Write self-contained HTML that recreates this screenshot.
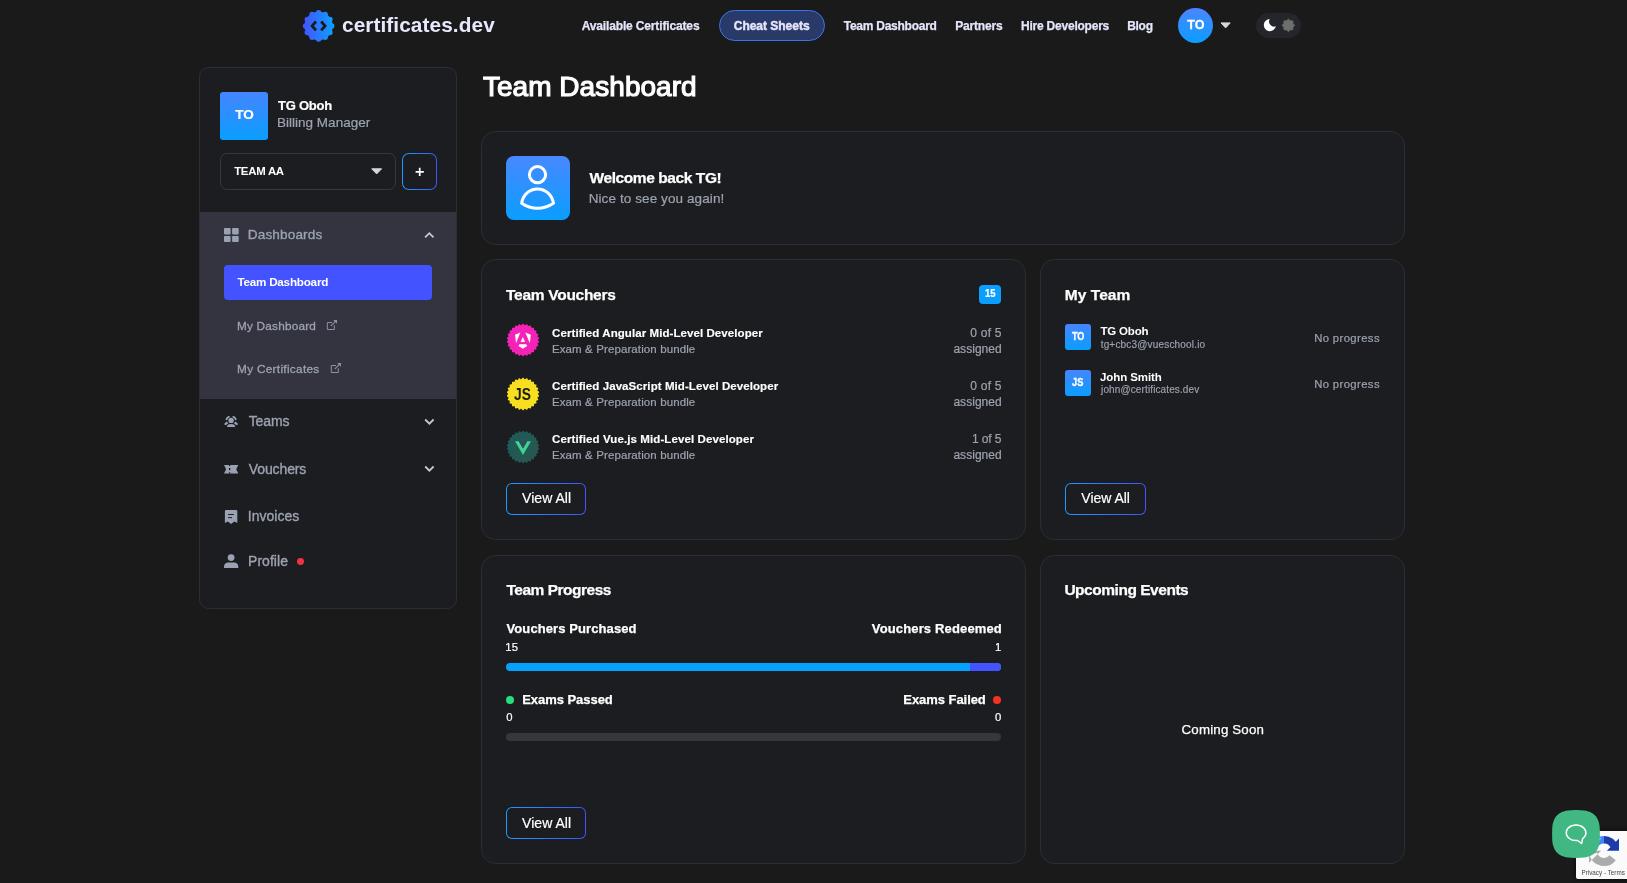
<!DOCTYPE html>
<html lang="en">
<head>
<meta charset="utf-8">
<title>Team Dashboard - certificates.dev</title>
<style>
*{box-sizing:border-box;margin:0;padding:0}
html,body{width:1627px;height:883px;overflow:hidden}
body{background:#1a1a1a;font-family:"Liberation Sans",sans-serif;position:relative;color:#fff}
.t{position:absolute;white-space:nowrap;display:block}
.abs{position:absolute}
.card{position:absolute;background:#1c1d21;border:1px solid #2c2d36;border-radius:14.5px}
.btn{position:absolute;width:80px;height:32px;border-radius:6px;background:linear-gradient(90deg,#1a9cff,#4353ff)}
.btn i{position:absolute;left:1.2px;top:1.2px;right:1.2px;bottom:1.2px;border-radius:4.8px;background:#1c1d21}
svg{position:absolute;display:block;overflow:visible}
#app{position:absolute;left:0;top:0;width:1627px;height:883px;overflow:hidden;will-change:transform}

</style>
</head>
<body>
<div id="app">
<!-- ================= HEADER ================= -->
<svg class="abs" style="left:303px;top:10px" width="31" height="31" viewBox="0 0 31 31">
  <defs><linearGradient id="lg" gradientUnits="userSpaceOnUse" x1="0" y1="0" x2="31" y2="0"><stop offset="0" stop-color="#4353ff"/><stop offset="1" stop-color="#0f9fff"/></linearGradient></defs>
  <g fill="url(#lg)"><circle cx="15.60" cy="15.90" r="14.15"/><circle cx="15.60" cy="2.80" r="2.70"/><circle cx="22.15" cy="4.56" r="2.70"/><circle cx="26.94" cy="9.35" r="2.70"/><circle cx="28.70" cy="15.90" r="2.70"/><circle cx="26.94" cy="22.45" r="2.70"/><circle cx="22.15" cy="27.24" r="2.70"/><circle cx="15.60" cy="29.00" r="2.70"/><circle cx="9.05" cy="27.24" r="2.70"/><circle cx="4.26" cy="22.45" r="2.70"/><circle cx="2.50" cy="15.90" r="2.70"/><circle cx="4.26" cy="9.35" r="2.70"/><circle cx="9.05" cy="4.56" r="2.70"/></g>
  <path d="M13.0 11.5 L9.1 15.9 L13.0 20.3 M18.2 11.5 L22.1 15.9 L18.2 20.3" fill="none" stroke="#1a1a1a" stroke-width="2.7" stroke-linejoin="miter"/>
</svg>
<div class="abs" style="left:719px;top:10px;width:106px;height:31px;border-radius:16px;background:#2a3a68;border:1.5px solid #3a74ea"></div>
<div class="abs" style="left:1178px;top:8px;width:35px;height:35px;border-radius:50%;background:linear-gradient(180deg,#4b85ff,#0a9eff)"></div>
<svg class="abs" style="left:1219px;top:21px" width="14" height="9" viewBox="0 0 14 9"><path d="M2 1.9 H11.2 L6.6 6.9 Z" fill="#d6d6d6" stroke="#d6d6d6" stroke-width="1" stroke-linejoin="round"/></svg>
<div class="abs" style="left:1256px;top:13px;width:45px;height:25px;border-radius:12.5px;background:#25262b"></div>
<svg class="abs" style="left:1262px;top:18px" width="16" height="15" viewBox="0 0 16 15"><path d="M7.75 1.00 A6.1 6.1 0 1 0 13.88 8.32 A5.1 5.1 0 0 1 7.75 1.00 Z" fill="#fff"/></svg>
<svg class="abs" style="left:1281px;top:18px" width="15" height="15" viewBox="0 0 15 15"><path d="M7.4 0.9 L9.3 2.7 L11.9 2.8 L12 5.4 L13.8 7.3 L12 9.2 L11.9 11.8 L9.3 11.9 L7.4 13.7 L5.5 11.9 L2.9 11.8 L2.8 9.2 L1 7.3 L2.8 5.4 L2.9 2.8 L5.5 2.7 Z" fill="#6e6e6e" stroke="#6e6e6e" stroke-width="0.6" stroke-linejoin="round"/></svg>

<!-- ================= SIDEBAR ================= -->
<div class="abs" style="left:199px;top:67px;width:258px;height:542px;border-radius:9.5px;background:#1c1d21;border:1px solid #2c2d36;overflow:hidden">
  <div class="abs" style="left:0;top:144px;width:256px;height:186.5px;background:#33343f"></div>
</div>
<div class="abs" style="left:220px;top:92px;width:48px;height:48px;border-radius:3px;background:linear-gradient(180deg,#4585ff,#0a9eff)"></div>
<div class="abs" style="left:220px;top:153px;width:176px;height:37px;border-radius:7px;border:1px solid #38393f"></div>
<svg class="abs" style="left:370px;top:167px" width="14" height="9" viewBox="0 0 14 9"><path d="M1.7 1.8 H11.6 L6.65 6.9 Z" fill="#d6d6d6" stroke="#d6d6d6" stroke-width="1" stroke-linejoin="round"/></svg>
<div class="abs" style="left:402px;top:153px;width:35px;height:37px;border-radius:7px;background:linear-gradient(90deg,#1a9cff,#4353ff)"><div class="abs" style="left:1.2px;top:1.2px;right:1.2px;bottom:1.2px;border-radius:5.8px;background:#1c1d21"></div></div>
<svg class="abs" style="left:414px;top:166px" width="12" height="12" viewBox="0 0 12 12"><path d="M1.6 5.9 H9.8 M5.7 1.8 V10" stroke="#fff" stroke-width="1.7" fill="none"/></svg>
<!-- dashboards icon -->
<svg class="abs" style="left:224px;top:228px" width="15" height="15" viewBox="0 0 15 15" fill="#9aa1b0"><rect x="0" y="0" width="6.6" height="6.4" rx="0.8"/><rect x="8.1" y="0" width="6.6" height="6.4" rx="0.8"/><rect x="0" y="8" width="6.6" height="6.1" rx="0.8"/><rect x="8.1" y="8" width="6.6" height="6.1" rx="0.8"/></svg>
<svg class="abs" style="left:423px;top:229px" width="13" height="12" viewBox="0 0 13 12"><path d="M2.1 8.4 L6.3 4.2 L10.5 8.4" fill="none" stroke="#c5c8d0" stroke-width="1.8"/></svg>
<div class="abs" style="left:224px;top:265px;width:208px;height:35px;border-radius:4px;background:#4353ff"></div>
<!-- external link icons -->
<svg class="abs" style="left:326px;top:319px" width="12" height="12" viewBox="0 0 12 12"><path d="M6 3.5 H1.3 V10.5 H8.3 V6.2" fill="none" stroke="#8c92a2" stroke-width="1"/><path d="M4.9 6.9 L10 1.8" stroke="#8c92a2" stroke-width="1.1" fill="none"/><path d="M7.2 1 H11 V4.8 Z" fill="#8c92a2"/></svg>
<svg class="abs" style="left:330.3px;top:362px" width="12" height="12" viewBox="0 0 12 12"><path d="M6 3.5 H1.3 V10.5 H8.3 V6.2" fill="none" stroke="#8c92a2" stroke-width="1"/><path d="M4.9 6.9 L10 1.8" stroke="#8c92a2" stroke-width="1.1" fill="none"/><path d="M7.2 1 H11 V4.8 Z" fill="#8c92a2"/></svg>
<!-- teams icon -->
<svg class="abs" style="left:223px;top:414px" width="17" height="15" viewBox="0 0 17 15" fill="#9aa1b0">
  <circle cx="8.1" cy="6.4" r="2.7"/>
  <path d="M4 12.9 C4 10.6 6 10 8.1 10 C10.2 10 12.2 10.6 12.2 12.9 Z"/>
  <path d="M3.5 5.3 A3.5 3.5 0 0 1 5.8 2.8" fill="none" stroke="#9aa1b0" stroke-width="1.9" stroke-linecap="round"/>
  <path d="M12.7 5.3 A3.5 3.5 0 0 0 10.4 2.8" fill="none" stroke="#9aa1b0" stroke-width="1.9" stroke-linecap="round"/>
  <path d="M1.2 10.4 C1.4 8.9 2.7 8 4.3 7.7 C4.6 8.6 5 9.2 5.5 9.6 C4.3 9.9 3.6 10.4 3.3 11.2 Z"/>
  <path d="M15 10.4 C14.8 8.9 13.5 8 11.9 7.7 C11.6 8.6 11.2 9.2 10.7 9.6 C11.9 9.9 12.6 10.4 12.9 11.2 Z"/>
</svg>
<svg class="abs" style="left:423px;top:416px" width="13" height="12" viewBox="0 0 13 12"><path d="M2.2 3.5 L6.4 7.7 L10.6 3.5" fill="none" stroke="#c5c8d0" stroke-width="1.8"/></svg>
<!-- vouchers icon -->
<svg class="abs" style="left:224px;top:465px" width="15" height="9" viewBox="0 0 15 9"><path d="M0 0 H14.3 L12.2 4.2 L14.3 8.4 H0 L2.1 4.2 Z" fill="#9aa1b0"/><path d="M5.6 0 V1.1 M5.6 3.1 V5.3 M5.6 7.3 V8.4" stroke="#1c1d21" stroke-width="1.3" fill="none"/></svg>
<svg class="abs" style="left:423px;top:463px" width="13" height="12" viewBox="0 0 13 12"><path d="M2.2 3.5 L6.4 7.7 L10.6 3.5" fill="none" stroke="#c5c8d0" stroke-width="1.8"/></svg>
<!-- invoices icon -->
<svg class="abs" style="left:224px;top:509px" width="15" height="16" viewBox="0 0 15 16"><path d="M2 1 H12.2 Q13.3 1 13.3 2.1 V13.9 L10.4 12.5 L7.1 15.0 L3.8 12.5 L0.9 13.9 V2.1 Q0.9 1 2 1 Z" fill="#9aa1b0"/><path d="M4.1 5.5 H9.8 M4.1 8.6 H8" stroke="#1c1d21" stroke-width="1" fill="none"/></svg>
<!-- profile icon -->
<svg class="abs" style="left:224px;top:553px" width="15" height="16" viewBox="0 0 15 16" fill="#9aa1b0"><circle cx="7.1" cy="4.6" r="3.4"/><path d="M0 15.1 V13.6 C0 11 2.2 9.6 4 9.6 H10.3 C12.1 9.6 14.3 11 14.3 13.6 V15.1 Z"/></svg>
<div class="abs" style="left:296.8px;top:558px;width:6.8px;height:6.8px;border-radius:50%;background:#ef3340"></div>

<!-- ================= MAIN ================= -->
<div class="card" style="left:481px;top:131px;width:924px;height:113.5px"></div>
<div class="abs" style="left:506px;top:156px;width:64px;height:64px;border-radius:8px;background:linear-gradient(180deg,#4888ff,#0a9eff)"></div>
<svg class="abs" style="left:506px;top:156px" width="64" height="64" viewBox="0 0 64 64" fill="none" stroke="#fff" stroke-width="3"><circle cx="31.5" cy="18.7" r="8.1"/><path d="M15.6 47.3 C17 38.5 23.5 32.9 31.5 32.9 C39.5 32.9 46 38.5 47.5 47.3 C42.5 50.6 37 52.3 31.5 52.3 C26 52.3 20.5 50.6 15.6 47.3 Z" stroke-linejoin="round"/></svg>

<!-- Team vouchers card -->
<div class="card" style="left:481px;top:259px;width:545px;height:280.5px"></div>
<div class="abs" style="left:979px;top:285px;width:22.2px;height:18.7px;border-radius:4px;background:#0a9eff"></div>
<!-- Angular badge -->
<svg class="abs" style="left:506.8px;top:324.3px" width="32" height="32" viewBox="0 0 32 32">
  <g fill="#f522b8"><path d="M30.90 16.00 L30.99 16.30 L31.24 16.61 L31.57 16.94 L31.90 17.28 L32.12 17.63 L32.18 17.96 L32.05 18.28 L31.74 18.56 L31.34 18.81 L30.94 19.05 L30.63 19.29 L30.47 19.57 L30.48 19.88 L30.65 20.24 L30.89 20.64 L31.13 21.05 L31.27 21.44 L31.24 21.78 L31.03 22.05 L30.67 22.25 L30.23 22.40 L29.78 22.54 L29.41 22.70 L29.19 22.92 L29.13 23.23 L29.21 23.62 L29.35 24.07 L29.48 24.52 L29.52 24.94 L29.41 25.26 L29.15 25.47 L28.75 25.58 L28.28 25.62 L27.81 25.64 L27.42 25.71 L27.15 25.88 L27.02 26.17 L27.00 26.56 L27.03 27.03 L27.05 27.50 L26.99 27.91 L26.81 28.20 L26.50 28.34 L26.09 28.35 L25.62 28.28 L25.16 28.19 L24.76 28.17 L24.46 28.26 L24.27 28.51 L24.15 28.89 L24.07 29.35 L23.97 29.81 L23.82 30.20 L23.57 30.43 L23.24 30.50 L22.84 30.41 L22.40 30.23 L21.98 30.03 L21.60 29.91 L21.28 29.93 L21.03 30.12 L20.83 30.47 L20.64 30.89 L20.44 31.32 L20.19 31.65 L19.90 31.83 L19.56 31.81 L19.19 31.63 L18.81 31.34 L18.45 31.05 L18.11 30.85 L17.80 30.79 L17.51 30.92 L17.23 31.20 L16.94 31.57 L16.64 31.94 L16.33 32.20 L16.00 32.30 L15.67 32.20 L15.36 31.94 L15.06 31.57 L14.77 31.20 L14.49 30.92 L14.20 30.79 L13.89 30.85 L13.55 31.05 L13.19 31.34 L12.81 31.63 L12.44 31.81 L12.10 31.83 L11.81 31.65 L11.56 31.32 L11.36 30.89 L11.17 30.47 L10.97 30.12 L10.72 29.93 L10.40 29.91 L10.02 30.03 L9.60 30.23 L9.16 30.41 L8.76 30.50 L8.43 30.43 L8.18 30.20 L8.02 29.81 L7.93 29.35 L7.85 28.89 L7.73 28.51 L7.54 28.26 L7.24 28.17 L6.84 28.19 L6.38 28.28 L5.91 28.35 L5.50 28.34 L5.19 28.20 L5.01 27.91 L4.95 27.50 L4.97 27.03 L5.00 26.56 L4.98 26.17 L4.85 25.88 L4.58 25.71 L4.19 25.64 L3.72 25.62 L3.25 25.58 L2.85 25.47 L2.59 25.26 L2.48 24.94 L2.52 24.52 L2.65 24.07 L2.79 23.63 L2.87 23.23 L2.81 22.92 L2.59 22.70 L2.22 22.54 L1.77 22.40 L1.33 22.25 L0.97 22.05 L0.76 21.78 L0.73 21.44 L0.87 21.05 L1.11 20.64 L1.35 20.24 L1.52 19.88 L1.53 19.57 L1.37 19.29 L1.06 19.05 L0.66 18.81 L0.26 18.56 L-0.05 18.28 L-0.18 17.96 L-0.12 17.63 L0.10 17.28 L0.43 16.94 L0.76 16.61 L1.01 16.30 L1.10 16.00 L1.01 15.70 L0.76 15.39 L0.43 15.06 L0.10 14.72 L-0.12 14.37 L-0.18 14.04 L-0.05 13.72 L0.26 13.44 L0.66 13.19 L1.06 12.95 L1.37 12.71 L1.53 12.43 L1.52 12.12 L1.35 11.76 L1.11 11.36 L0.87 10.95 L0.73 10.56 L0.76 10.22 L0.97 9.95 L1.33 9.75 L1.77 9.60 L2.22 9.46 L2.59 9.30 L2.81 9.08 L2.87 8.77 L2.79 8.38 L2.65 7.93 L2.52 7.48 L2.48 7.06 L2.59 6.74 L2.85 6.53 L3.25 6.42 L3.72 6.38 L4.19 6.36 L4.58 6.29 L4.85 6.12 L4.98 5.83 L5.00 5.44 L4.97 4.97 L4.95 4.50 L5.01 4.09 L5.19 3.80 L5.50 3.66 L5.91 3.65 L6.38 3.72 L6.84 3.81 L7.24 3.83 L7.54 3.74 L7.73 3.49 L7.85 3.11 L7.93 2.65 L8.03 2.19 L8.18 1.80 L8.43 1.57 L8.76 1.50 L9.16 1.59 L9.60 1.77 L10.02 1.97 L10.40 2.09 L10.72 2.07 L10.97 1.88 L11.17 1.53 L11.36 1.11 L11.56 0.68 L11.81 0.35 L12.10 0.17 L12.44 0.19 L12.81 0.37 L13.19 0.66 L13.55 0.95 L13.89 1.15 L14.20 1.21 L14.49 1.08 L14.77 0.80 L15.06 0.43 L15.36 0.06 L15.67 -0.20 L16.00 -0.30 L16.33 -0.20 L16.64 0.06 L16.94 0.43 L17.23 0.80 L17.51 1.08 L17.80 1.21 L18.11 1.15 L18.45 0.95 L18.81 0.66 L19.19 0.37 L19.56 0.19 L19.90 0.17 L20.19 0.35 L20.44 0.68 L20.64 1.11 L20.83 1.53 L21.03 1.88 L21.28 2.07 L21.60 2.09 L21.98 1.97 L22.40 1.77 L22.84 1.59 L23.24 1.50 L23.57 1.57 L23.82 1.80 L23.97 2.19 L24.07 2.65 L24.15 3.11 L24.27 3.49 L24.46 3.74 L24.76 3.83 L25.16 3.81 L25.62 3.72 L26.09 3.65 L26.50 3.66 L26.81 3.80 L26.99 4.09 L27.05 4.50 L27.03 4.97 L27.00 5.44 L27.02 5.83 L27.15 6.12 L27.42 6.29 L27.81 6.36 L28.28 6.38 L28.75 6.42 L29.15 6.53 L29.41 6.74 L29.52 7.06 L29.48 7.48 L29.35 7.93 L29.21 8.37 L29.13 8.77 L29.19 9.08 L29.41 9.30 L29.78 9.46 L30.23 9.60 L30.67 9.75 L31.03 9.95 L31.24 10.22 L31.27 10.56 L31.13 10.95 L30.89 11.36 L30.65 11.76 L30.48 12.12 L30.47 12.43 L30.63 12.71 L30.94 12.95 L31.34 13.19 L31.74 13.44 L32.05 13.72 L32.18 14.04 L32.12 14.37 L31.90 14.72 L31.57 15.06 L31.24 15.39 L30.99 15.70 Z"/></g>
  <g fill="#ffffff">
    <path d="M8.05 10.7 L13.3 8.5 L9.0 19.3 Z"/>
    <path d="M23.75 10.7 L18.3 8.5 L22.9 19.3 Z"/>
    <path d="M15.85 13.1 L13.6 17.9 H18.1 Z"/>
    <path d="M12.5 20.3 H19.2 L20.2 22.0 L15.85 24.7 L11.5 22.0 Z"/>
  </g>
</svg>
<!-- JS badge -->
<svg class="abs" style="left:506.8px;top:377.5px" width="32" height="32" viewBox="0 0 32 32">
  <g fill="#f7de1f"><path d="M30.90 16.00 L30.99 16.30 L31.24 16.61 L31.57 16.94 L31.90 17.28 L32.12 17.63 L32.18 17.96 L32.05 18.28 L31.74 18.56 L31.34 18.81 L30.94 19.05 L30.63 19.29 L30.47 19.57 L30.48 19.88 L30.65 20.24 L30.89 20.64 L31.13 21.05 L31.27 21.44 L31.24 21.78 L31.03 22.05 L30.67 22.25 L30.23 22.40 L29.78 22.54 L29.41 22.70 L29.19 22.92 L29.13 23.23 L29.21 23.62 L29.35 24.07 L29.48 24.52 L29.52 24.94 L29.41 25.26 L29.15 25.47 L28.75 25.58 L28.28 25.62 L27.81 25.64 L27.42 25.71 L27.15 25.88 L27.02 26.17 L27.00 26.56 L27.03 27.03 L27.05 27.50 L26.99 27.91 L26.81 28.20 L26.50 28.34 L26.09 28.35 L25.62 28.28 L25.16 28.19 L24.76 28.17 L24.46 28.26 L24.27 28.51 L24.15 28.89 L24.07 29.35 L23.97 29.81 L23.82 30.20 L23.57 30.43 L23.24 30.50 L22.84 30.41 L22.40 30.23 L21.98 30.03 L21.60 29.91 L21.28 29.93 L21.03 30.12 L20.83 30.47 L20.64 30.89 L20.44 31.32 L20.19 31.65 L19.90 31.83 L19.56 31.81 L19.19 31.63 L18.81 31.34 L18.45 31.05 L18.11 30.85 L17.80 30.79 L17.51 30.92 L17.23 31.20 L16.94 31.57 L16.64 31.94 L16.33 32.20 L16.00 32.30 L15.67 32.20 L15.36 31.94 L15.06 31.57 L14.77 31.20 L14.49 30.92 L14.20 30.79 L13.89 30.85 L13.55 31.05 L13.19 31.34 L12.81 31.63 L12.44 31.81 L12.10 31.83 L11.81 31.65 L11.56 31.32 L11.36 30.89 L11.17 30.47 L10.97 30.12 L10.72 29.93 L10.40 29.91 L10.02 30.03 L9.60 30.23 L9.16 30.41 L8.76 30.50 L8.43 30.43 L8.18 30.20 L8.02 29.81 L7.93 29.35 L7.85 28.89 L7.73 28.51 L7.54 28.26 L7.24 28.17 L6.84 28.19 L6.38 28.28 L5.91 28.35 L5.50 28.34 L5.19 28.20 L5.01 27.91 L4.95 27.50 L4.97 27.03 L5.00 26.56 L4.98 26.17 L4.85 25.88 L4.58 25.71 L4.19 25.64 L3.72 25.62 L3.25 25.58 L2.85 25.47 L2.59 25.26 L2.48 24.94 L2.52 24.52 L2.65 24.07 L2.79 23.63 L2.87 23.23 L2.81 22.92 L2.59 22.70 L2.22 22.54 L1.77 22.40 L1.33 22.25 L0.97 22.05 L0.76 21.78 L0.73 21.44 L0.87 21.05 L1.11 20.64 L1.35 20.24 L1.52 19.88 L1.53 19.57 L1.37 19.29 L1.06 19.05 L0.66 18.81 L0.26 18.56 L-0.05 18.28 L-0.18 17.96 L-0.12 17.63 L0.10 17.28 L0.43 16.94 L0.76 16.61 L1.01 16.30 L1.10 16.00 L1.01 15.70 L0.76 15.39 L0.43 15.06 L0.10 14.72 L-0.12 14.37 L-0.18 14.04 L-0.05 13.72 L0.26 13.44 L0.66 13.19 L1.06 12.95 L1.37 12.71 L1.53 12.43 L1.52 12.12 L1.35 11.76 L1.11 11.36 L0.87 10.95 L0.73 10.56 L0.76 10.22 L0.97 9.95 L1.33 9.75 L1.77 9.60 L2.22 9.46 L2.59 9.30 L2.81 9.08 L2.87 8.77 L2.79 8.38 L2.65 7.93 L2.52 7.48 L2.48 7.06 L2.59 6.74 L2.85 6.53 L3.25 6.42 L3.72 6.38 L4.19 6.36 L4.58 6.29 L4.85 6.12 L4.98 5.83 L5.00 5.44 L4.97 4.97 L4.95 4.50 L5.01 4.09 L5.19 3.80 L5.50 3.66 L5.91 3.65 L6.38 3.72 L6.84 3.81 L7.24 3.83 L7.54 3.74 L7.73 3.49 L7.85 3.11 L7.93 2.65 L8.03 2.19 L8.18 1.80 L8.43 1.57 L8.76 1.50 L9.16 1.59 L9.60 1.77 L10.02 1.97 L10.40 2.09 L10.72 2.07 L10.97 1.88 L11.17 1.53 L11.36 1.11 L11.56 0.68 L11.81 0.35 L12.10 0.17 L12.44 0.19 L12.81 0.37 L13.19 0.66 L13.55 0.95 L13.89 1.15 L14.20 1.21 L14.49 1.08 L14.77 0.80 L15.06 0.43 L15.36 0.06 L15.67 -0.20 L16.00 -0.30 L16.33 -0.20 L16.64 0.06 L16.94 0.43 L17.23 0.80 L17.51 1.08 L17.80 1.21 L18.11 1.15 L18.45 0.95 L18.81 0.66 L19.19 0.37 L19.56 0.19 L19.90 0.17 L20.19 0.35 L20.44 0.68 L20.64 1.11 L20.83 1.53 L21.03 1.88 L21.28 2.07 L21.60 2.09 L21.98 1.97 L22.40 1.77 L22.84 1.59 L23.24 1.50 L23.57 1.57 L23.82 1.80 L23.97 2.19 L24.07 2.65 L24.15 3.11 L24.27 3.49 L24.46 3.74 L24.76 3.83 L25.16 3.81 L25.62 3.72 L26.09 3.65 L26.50 3.66 L26.81 3.80 L26.99 4.09 L27.05 4.50 L27.03 4.97 L27.00 5.44 L27.02 5.83 L27.15 6.12 L27.42 6.29 L27.81 6.36 L28.28 6.38 L28.75 6.42 L29.15 6.53 L29.41 6.74 L29.52 7.06 L29.48 7.48 L29.35 7.93 L29.21 8.37 L29.13 8.77 L29.19 9.08 L29.41 9.30 L29.78 9.46 L30.23 9.60 L30.67 9.75 L31.03 9.95 L31.24 10.22 L31.27 10.56 L31.13 10.95 L30.89 11.36 L30.65 11.76 L30.48 12.12 L30.47 12.43 L30.63 12.71 L30.94 12.95 L31.34 13.19 L31.74 13.44 L32.05 13.72 L32.18 14.04 L32.12 14.37 L31.90 14.72 L31.57 15.06 L31.24 15.39 L30.99 15.70 Z"/></g>
  <text x="7.1" y="21.5" textLength="16.9" lengthAdjust="spacingAndGlyphs" font-family="Liberation Sans, sans-serif" font-weight="bold" font-size="15.6" fill="#1a1a1a">JS</text>
</svg>
<!-- Vue badge -->
<svg class="abs" style="left:506.8px;top:430.5px" width="32" height="32" viewBox="0 0 32 32">
  <defs><linearGradient id="vg" gradientUnits="userSpaceOnUse" x1="0" y1="0" x2="32" y2="20"><stop offset="0" stop-color="#1c5a58"/><stop offset="1" stop-color="#27584f"/></linearGradient></defs>
  <g fill="url(#vg)"><path d="M30.90 16.00 L30.99 16.30 L31.24 16.61 L31.57 16.94 L31.90 17.28 L32.12 17.63 L32.18 17.96 L32.05 18.28 L31.74 18.56 L31.34 18.81 L30.94 19.05 L30.63 19.29 L30.47 19.57 L30.48 19.88 L30.65 20.24 L30.89 20.64 L31.13 21.05 L31.27 21.44 L31.24 21.78 L31.03 22.05 L30.67 22.25 L30.23 22.40 L29.78 22.54 L29.41 22.70 L29.19 22.92 L29.13 23.23 L29.21 23.62 L29.35 24.07 L29.48 24.52 L29.52 24.94 L29.41 25.26 L29.15 25.47 L28.75 25.58 L28.28 25.62 L27.81 25.64 L27.42 25.71 L27.15 25.88 L27.02 26.17 L27.00 26.56 L27.03 27.03 L27.05 27.50 L26.99 27.91 L26.81 28.20 L26.50 28.34 L26.09 28.35 L25.62 28.28 L25.16 28.19 L24.76 28.17 L24.46 28.26 L24.27 28.51 L24.15 28.89 L24.07 29.35 L23.97 29.81 L23.82 30.20 L23.57 30.43 L23.24 30.50 L22.84 30.41 L22.40 30.23 L21.98 30.03 L21.60 29.91 L21.28 29.93 L21.03 30.12 L20.83 30.47 L20.64 30.89 L20.44 31.32 L20.19 31.65 L19.90 31.83 L19.56 31.81 L19.19 31.63 L18.81 31.34 L18.45 31.05 L18.11 30.85 L17.80 30.79 L17.51 30.92 L17.23 31.20 L16.94 31.57 L16.64 31.94 L16.33 32.20 L16.00 32.30 L15.67 32.20 L15.36 31.94 L15.06 31.57 L14.77 31.20 L14.49 30.92 L14.20 30.79 L13.89 30.85 L13.55 31.05 L13.19 31.34 L12.81 31.63 L12.44 31.81 L12.10 31.83 L11.81 31.65 L11.56 31.32 L11.36 30.89 L11.17 30.47 L10.97 30.12 L10.72 29.93 L10.40 29.91 L10.02 30.03 L9.60 30.23 L9.16 30.41 L8.76 30.50 L8.43 30.43 L8.18 30.20 L8.02 29.81 L7.93 29.35 L7.85 28.89 L7.73 28.51 L7.54 28.26 L7.24 28.17 L6.84 28.19 L6.38 28.28 L5.91 28.35 L5.50 28.34 L5.19 28.20 L5.01 27.91 L4.95 27.50 L4.97 27.03 L5.00 26.56 L4.98 26.17 L4.85 25.88 L4.58 25.71 L4.19 25.64 L3.72 25.62 L3.25 25.58 L2.85 25.47 L2.59 25.26 L2.48 24.94 L2.52 24.52 L2.65 24.07 L2.79 23.63 L2.87 23.23 L2.81 22.92 L2.59 22.70 L2.22 22.54 L1.77 22.40 L1.33 22.25 L0.97 22.05 L0.76 21.78 L0.73 21.44 L0.87 21.05 L1.11 20.64 L1.35 20.24 L1.52 19.88 L1.53 19.57 L1.37 19.29 L1.06 19.05 L0.66 18.81 L0.26 18.56 L-0.05 18.28 L-0.18 17.96 L-0.12 17.63 L0.10 17.28 L0.43 16.94 L0.76 16.61 L1.01 16.30 L1.10 16.00 L1.01 15.70 L0.76 15.39 L0.43 15.06 L0.10 14.72 L-0.12 14.37 L-0.18 14.04 L-0.05 13.72 L0.26 13.44 L0.66 13.19 L1.06 12.95 L1.37 12.71 L1.53 12.43 L1.52 12.12 L1.35 11.76 L1.11 11.36 L0.87 10.95 L0.73 10.56 L0.76 10.22 L0.97 9.95 L1.33 9.75 L1.77 9.60 L2.22 9.46 L2.59 9.30 L2.81 9.08 L2.87 8.77 L2.79 8.38 L2.65 7.93 L2.52 7.48 L2.48 7.06 L2.59 6.74 L2.85 6.53 L3.25 6.42 L3.72 6.38 L4.19 6.36 L4.58 6.29 L4.85 6.12 L4.98 5.83 L5.00 5.44 L4.97 4.97 L4.95 4.50 L5.01 4.09 L5.19 3.80 L5.50 3.66 L5.91 3.65 L6.38 3.72 L6.84 3.81 L7.24 3.83 L7.54 3.74 L7.73 3.49 L7.85 3.11 L7.93 2.65 L8.03 2.19 L8.18 1.80 L8.43 1.57 L8.76 1.50 L9.16 1.59 L9.60 1.77 L10.02 1.97 L10.40 2.09 L10.72 2.07 L10.97 1.88 L11.17 1.53 L11.36 1.11 L11.56 0.68 L11.81 0.35 L12.10 0.17 L12.44 0.19 L12.81 0.37 L13.19 0.66 L13.55 0.95 L13.89 1.15 L14.20 1.21 L14.49 1.08 L14.77 0.80 L15.06 0.43 L15.36 0.06 L15.67 -0.20 L16.00 -0.30 L16.33 -0.20 L16.64 0.06 L16.94 0.43 L17.23 0.80 L17.51 1.08 L17.80 1.21 L18.11 1.15 L18.45 0.95 L18.81 0.66 L19.19 0.37 L19.56 0.19 L19.90 0.17 L20.19 0.35 L20.44 0.68 L20.64 1.11 L20.83 1.53 L21.03 1.88 L21.28 2.07 L21.60 2.09 L21.98 1.97 L22.40 1.77 L22.84 1.59 L23.24 1.50 L23.57 1.57 L23.82 1.80 L23.97 2.19 L24.07 2.65 L24.15 3.11 L24.27 3.49 L24.46 3.74 L24.76 3.83 L25.16 3.81 L25.62 3.72 L26.09 3.65 L26.50 3.66 L26.81 3.80 L26.99 4.09 L27.05 4.50 L27.03 4.97 L27.00 5.44 L27.02 5.83 L27.15 6.12 L27.42 6.29 L27.81 6.36 L28.28 6.38 L28.75 6.42 L29.15 6.53 L29.41 6.74 L29.52 7.06 L29.48 7.48 L29.35 7.93 L29.21 8.37 L29.13 8.77 L29.19 9.08 L29.41 9.30 L29.78 9.46 L30.23 9.60 L30.67 9.75 L31.03 9.95 L31.24 10.22 L31.27 10.56 L31.13 10.95 L30.89 11.36 L30.65 11.76 L30.48 12.12 L30.47 12.43 L30.63 12.71 L30.94 12.95 L31.34 13.19 L31.74 13.44 L32.05 13.72 L32.18 14.04 L32.12 14.37 L31.90 14.72 L31.57 15.06 L31.24 15.39 L30.99 15.70 Z"/></g>
  <path d="M8 10.2 H11.8 L16 17.5 L20.2 10.2 H24 L16 23.9 Z" fill="#42d392"/>
  <path d="M11.8 10.2 H14 L16 13.7 L18 10.2 H20.2 L16 17.5 Z" fill="#35495e"/>
</svg>
<div class="btn" style="left:506px;top:483px"><i></i></div>

<!-- My team card -->
<div class="card" style="left:1040px;top:259px;width:365px;height:280.5px"></div>
<div class="abs" style="left:1065px;top:324px;width:26px;height:26px;border-radius:3px;background:linear-gradient(180deg,#4585ff,#0a9eff)"></div>
<div class="abs" style="left:1065px;top:370px;width:26px;height:26px;border-radius:3px;background:linear-gradient(180deg,#4585ff,#0a9eff)"></div>
<div class="btn" style="left:1065px;top:483px;width:81px"><i></i></div>

<!-- Progress card -->
<div class="card" style="left:481px;top:554.5px;width:545px;height:309px"></div>
<div class="abs" style="left:506.4px;top:663px;width:494.6px;height:8px;border-radius:4px;background:#05a1ff;overflow:hidden"><div class="abs" style="right:0;top:0;width:30.7px;height:8px;background:#4353ff"></div></div>
<div class="abs" style="left:506.4px;top:695.7px;width:8px;height:8px;border-radius:50%;background:#25df7c"></div>
<div class="abs" style="left:993.2px;top:695.7px;width:8px;height:8px;border-radius:50%;background:#f5321f"></div>
<div class="abs" style="left:506.4px;top:733px;width:494.6px;height:8px;border-radius:4px;background:#36373d"></div>
<div class="btn" style="left:506px;top:807px"><i></i></div>

<!-- Events card -->
<div class="card" style="left:1040px;top:554.5px;width:365px;height:309px"></div>

<!-- recaptcha + chat -->
<div class="abs" style="left:1576px;top:831px;width:60px;height:48px;background:#fafafa;border-radius:2px;box-shadow:0 0 5px rgba(0,0,0,.75)"></div>
<svg class="abs" style="left:1604px;top:851.2px" width="1" height="1" viewBox="0 0 1 1">
  <path d="M0 -15 A15 15 0 0 1 14.5 -3.9 L7.2 -1.9 A7.5 7.5 0 0 0 0 -7.5 Z M15 -12.4 V-0.3 H2.9 Z" fill="#1c3aa9"/>
  <path d="M0 -15 A15 15 0 0 0 -13 -7.5 L-6.5 -3.75 A7.5 7.5 0 0 1 0 -7.5 Z M-15 -12.4 L-2.9 -12.4 L-15 -0.3 Z" fill="#4285f4"/>
  <path d="M-14.5 3.9 A15 15 0 0 0 11.8 9.2 L5.5 4.3 A7 7 0 0 1 -6.8 1.8 Z M-15 -0.3 H-2.9 L-15 11.8 Z" fill="#ababab"/>
</svg>
<svg class="abs" style="left:1552px;top:810px" width="48" height="48" viewBox="0 0 48 48"><path d="M47.9 24.0 L47.8 28.8 L47.6 31.7 L47.2 34.2 L46.6 36.3 L45.9 38.2 L45.0 39.9 L44.0 41.5 L42.8 42.8 L41.5 44.0 L39.9 45.0 L38.2 45.9 L36.3 46.6 L34.2 47.2 L31.7 47.6 L28.8 47.8 L24.0 47.9 L19.2 47.8 L16.3 47.6 L13.8 47.2 L11.7 46.6 L9.8 45.9 L8.1 45.0 L6.5 44.0 L5.2 42.8 L4.0 41.5 L3.0 39.9 L2.1 38.2 L1.4 36.3 L0.8 34.2 L0.4 31.7 L0.2 28.8 L0.1 24.0 L0.2 19.2 L0.4 16.3 L0.8 13.8 L1.4 11.7 L2.1 9.8 L3.0 8.1 L4.0 6.5 L5.2 5.2 L6.5 4.0 L8.1 3.0 L9.8 2.1 L11.7 1.4 L13.8 0.8 L16.3 0.4 L19.2 0.2 L24.0 0.1 L28.8 0.2 L31.7 0.4 L34.2 0.8 L36.3 1.4 L38.2 2.1 L39.9 3.0 L41.5 4.0 L42.8 5.2 L44.0 6.5 L45.0 8.1 L45.9 9.8 L46.6 11.7 L47.2 13.8 L47.6 16.3 L47.8 19.2 Z" fill="#41b883"/><path d="M30.6 28.6 L29.6 33.5 L25.6 30.5 A9.8 7.8 0 1 1 30.6 28.6 Z" fill="none" stroke="#fff" stroke-width="1.5" stroke-linejoin="round"/></svg>

<!-- text layer -->
<span class="t" id="t0" style="top:14.75px;font-size:20.8px;line-height:20px;color:#e6e8fc;font-weight:bold;letter-spacing:0.084px;left:342.00px;">certificates.dev</span>
<span class="t" id="t1" style="top:16.00px;font-size:12px;line-height:20px;color:#e4e6fb;font-weight:bold;-webkit-text-stroke:0.25px #e4e6fb;letter-spacing:-0.145px;left:581.67px;">Available Certificates</span>
<span class="t" id="t2" style="top:16.00px;font-size:12px;line-height:20px;color:#e4e6fb;font-weight:bold;-webkit-text-stroke:0.45px #e4e6fb;letter-spacing:-0.020px;left:733.75px;">Cheat Sheets</span>
<span class="t" id="t3" style="top:16.00px;font-size:12px;line-height:20px;color:#e4e6fb;font-weight:bold;-webkit-text-stroke:0.25px #e4e6fb;letter-spacing:-0.249px;left:843.72px;">Team Dashboard</span>
<span class="t" id="t4" style="top:16.00px;font-size:12px;line-height:20px;color:#e4e6fb;font-weight:bold;-webkit-text-stroke:0.25px #e4e6fb;letter-spacing:-0.180px;left:955.20px;">Partners</span>
<span class="t" id="t5" style="top:16.00px;font-size:12px;line-height:20px;color:#e4e6fb;font-weight:bold;-webkit-text-stroke:0.25px #e4e6fb;letter-spacing:-0.224px;left:1021.05px;">Hire Developers</span>
<span class="t" id="t6" style="top:16.00px;font-size:12px;line-height:20px;color:#e4e6fb;font-weight:bold;-webkit-text-stroke:0.25px #e4e6fb;letter-spacing:-0.297px;left:1127.20px;">Blog</span>
<span class="t" id="t7" style="top:15.00px;font-size:12.5px;line-height:20px;color:#ffffff;font-weight:bold;-webkit-text-stroke:0.3px #ffffff;left:1187.28px;">TO</span>
<span class="t" id="t8" style="top:105.20px;font-size:13.5px;line-height:20px;color:#ffffff;font-weight:bold;-webkit-text-stroke:0.2px #ffffff;left:235.29px;">TO</span>
<span class="t" id="t9" style="top:96.00px;font-size:13px;line-height:20px;color:#ffffff;font-weight:bold;-webkit-text-stroke:0.2px #ffffff;letter-spacing:-0.253px;left:278.02px;">TG Oboh</span>
<span class="t" id="t10" style="top:113.20px;font-size:13.5px;line-height:20px;color:#9ca3af;-webkit-text-stroke:0.2px #9ca3af;letter-spacing:0.021px;left:276.91px;">Billing Manager</span>
<span class="t" id="t11" style="top:160.80px;font-size:11.4px;line-height:20px;color:#ffffff;font-weight:bold;letter-spacing:-0.250px;left:234.14px;">TEAM AA</span>
<span class="t" id="t12" style="top:224.90px;font-size:13.6px;line-height:20px;color:#9ca3af;-webkit-text-stroke:0.35px #9ca3af;letter-spacing:0.137px;left:247.76px;">Dashboards</span>
<span class="t" id="t13" style="top:272.10px;font-size:11.7px;line-height:20px;color:#ffffff;font-weight:bold;letter-spacing:-0.229px;left:237.38px;">Team Dashboard</span>
<span class="t" id="t14" style="top:316.20px;font-size:11.8px;line-height:20px;color:#9ca3af;-webkit-text-stroke:0.3px #9ca3af;letter-spacing:0.192px;left:237.04px;">My Dashboard</span>
<span class="t" id="t15" style="top:359.20px;font-size:11.8px;line-height:20px;color:#9ca3af;-webkit-text-stroke:0.3px #9ca3af;letter-spacing:0.302px;left:237.04px;">My Certificates</span>
<span class="t" id="t16" style="top:411.10px;font-size:14px;line-height:20px;color:#9ca3af;-webkit-text-stroke:0.35px #9ca3af;letter-spacing:-0.147px;left:248.77px;">Teams</span>
<span class="t" id="t17" style="top:458.90px;font-size:14px;line-height:20px;color:#9ca3af;-webkit-text-stroke:0.35px #9ca3af;letter-spacing:-0.120px;left:248.84px;">Vouchers</span>
<span class="t" id="t18" style="top:506.30px;font-size:14px;line-height:20px;color:#9ca3af;-webkit-text-stroke:0.35px #9ca3af;letter-spacing:0.011px;left:247.85px;">Invoices</span>
<span class="t" id="t19" style="top:551.40px;font-size:14px;line-height:20px;color:#9ca3af;-webkit-text-stroke:0.35px #9ca3af;letter-spacing:0.042px;left:248.01px;">Profile</span>
<span class="t" id="t20" style="top:76.90px;font-size:28px;line-height:20px;color:#ffffff;-webkit-text-stroke:1.15px #ffffff;letter-spacing:0.041px;left:482.92px;">Team Dashboard</span>
<span class="t" id="t21" style="top:167.50px;font-size:15.5px;line-height:20px;color:#ffffff;font-weight:bold;-webkit-text-stroke:0.25px #ffffff;letter-spacing:-0.422px;left:589.62px;">Welcome back TG!</span>
<span class="t" id="t22" style="top:188.50px;font-size:13.5px;line-height:20px;color:#9ca3af;-webkit-text-stroke:0.2px #9ca3af;letter-spacing:0.095px;left:588.66px;">Nice to see you again!</span>
<span class="t" id="t23" style="top:285.00px;font-size:15.5px;line-height:20px;color:#ffffff;font-weight:bold;-webkit-text-stroke:0.25px #ffffff;letter-spacing:-0.282px;left:506.05px;">Team Vouchers</span>
<span class="t" id="t24" style="top:283.80px;font-size:10.3px;line-height:20px;color:#ffffff;font-weight:bold;-webkit-text-stroke:0.2px #ffffff;transform:scaleX(0.92);transform-origin:left 50%;left:984.90px;">15</span>
<span class="t" id="t25" style="top:323.20px;font-size:11.5px;line-height:20px;color:#ffffff;font-weight:bold;-webkit-text-stroke:0.15px #ffffff;letter-spacing:0.076px;left:552.09px;">Certified Angular Mid-Level Developer</span>
<span class="t" id="t26" style="top:339.40px;font-size:11.5px;line-height:20px;color:#9ca3af;-webkit-text-stroke:0.2px #9ca3af;letter-spacing:0.113px;left:551.92px;">Exam &amp; Preparation bundle</span>
<span class="t" id="t27" style="top:323.00px;font-size:12px;line-height:20px;color:#9ca3af;-webkit-text-stroke:0.2px #9ca3af;letter-spacing:0.237px;right:625.28px;">0 of 5</span>
<span class="t" id="t28" style="top:339.20px;font-size:12px;line-height:20px;color:#9ca3af;-webkit-text-stroke:0.2px #9ca3af;letter-spacing:0.043px;right:625.22px;">assigned</span>
<span class="t" id="t29" style="top:376.20px;font-size:11.5px;line-height:20px;color:#ffffff;font-weight:bold;-webkit-text-stroke:0.15px #ffffff;letter-spacing:0.078px;left:552.09px;">Certified JavaScript Mid-Level Developer</span>
<span class="t" id="t30" style="top:392.40px;font-size:11.5px;line-height:20px;color:#9ca3af;-webkit-text-stroke:0.2px #9ca3af;letter-spacing:0.113px;left:551.92px;">Exam &amp; Preparation bundle</span>
<span class="t" id="t31" style="top:376.00px;font-size:12px;line-height:20px;color:#9ca3af;-webkit-text-stroke:0.2px #9ca3af;letter-spacing:0.237px;right:625.28px;">0 of 5</span>
<span class="t" id="t32" style="top:392.20px;font-size:12px;line-height:20px;color:#9ca3af;-webkit-text-stroke:0.2px #9ca3af;letter-spacing:0.043px;right:625.22px;">assigned</span>
<span class="t" id="t33" style="top:429.20px;font-size:11.5px;line-height:20px;color:#ffffff;font-weight:bold;-webkit-text-stroke:0.15px #ffffff;letter-spacing:0.101px;left:552.09px;">Certified Vue.js Mid-Level Developer</span>
<span class="t" id="t34" style="top:445.40px;font-size:11.5px;line-height:20px;color:#9ca3af;-webkit-text-stroke:0.2px #9ca3af;letter-spacing:0.113px;left:551.92px;">Exam &amp; Preparation bundle</span>
<span class="t" id="t35" style="top:429.00px;font-size:12px;line-height:20px;color:#9ca3af;-webkit-text-stroke:0.2px #9ca3af;letter-spacing:-0.098px;right:625.62px;">1 of 5</span>
<span class="t" id="t36" style="top:445.20px;font-size:12px;line-height:20px;color:#9ca3af;-webkit-text-stroke:0.2px #9ca3af;letter-spacing:0.043px;right:625.22px;">assigned</span>
<span class="t" id="t37" style="top:488.40px;font-size:14px;line-height:20px;color:#ffffff;-webkit-text-stroke:0.2px #ffffff;letter-spacing:0.044px;left:522.04px;">View All</span>
<span class="t" id="t38" style="top:284.80px;font-size:15.5px;line-height:20px;color:#ffffff;font-weight:bold;-webkit-text-stroke:0.25px #ffffff;letter-spacing:0.072px;left:1064.72px;">My Team</span>
<span class="t" id="t39" style="top:326.60px;font-size:10.3px;line-height:20px;color:#ffffff;font-weight:bold;-webkit-text-stroke:0.3px #ffffff;transform:scaleX(0.88);transform-origin:left 50%;left:1071.70px;">TO</span>
<span class="t" id="t40" style="top:320.80px;font-size:11.5px;line-height:20px;color:#ffffff;font-weight:bold;letter-spacing:-0.153px;left:1100.38px;">TG Oboh</span>
<span class="t" id="t41" style="top:334.80px;font-size:10px;line-height:20px;color:#9ca3af;-webkit-text-stroke:0.15px #9ca3af;letter-spacing:0.181px;left:1100.68px;">tg+cbc3@vueschool.io</span>
<span class="t" id="t42" style="top:328.30px;font-size:11.3px;line-height:20px;color:#9ca3af;-webkit-text-stroke:0.2px #9ca3af;letter-spacing:0.389px;left:1314.14px;">No progress</span>
<span class="t" id="t43" style="top:372.80px;font-size:10.3px;line-height:20px;color:#ffffff;font-weight:bold;-webkit-text-stroke:0.3px #ffffff;transform:scaleX(0.9);transform-origin:left 50%;left:1072.20px;">JS</span>
<span class="t" id="t44" style="top:366.70px;font-size:11.5px;line-height:20px;color:#ffffff;font-weight:bold;letter-spacing:-0.109px;left:1100.09px;">John Smith</span>
<span class="t" id="t45" style="top:380.00px;font-size:10px;line-height:20px;color:#9ca3af;-webkit-text-stroke:0.15px #9ca3af;letter-spacing:0.120px;left:1101.08px;">john@certificates.dev</span>
<span class="t" id="t46" style="top:374.40px;font-size:11.3px;line-height:20px;color:#9ca3af;-webkit-text-stroke:0.2px #9ca3af;letter-spacing:0.389px;left:1314.14px;">No progress</span>
<span class="t" id="t47" style="top:488.40px;font-size:14px;line-height:20px;color:#ffffff;-webkit-text-stroke:0.2px #ffffff;letter-spacing:-0.024px;left:1081.36px;">View All</span>
<span class="t" id="t48" style="top:579.80px;font-size:15.5px;line-height:20px;color:#ffffff;font-weight:bold;-webkit-text-stroke:0.25px #ffffff;letter-spacing:-0.486px;left:506.44px;">Team Progress</span>
<span class="t" id="t49" style="top:619.20px;font-size:13px;line-height:20px;color:#ffffff;font-weight:bold;-webkit-text-stroke:0.25px #ffffff;letter-spacing:0.096px;left:506.50px;">Vouchers Purchased</span>
<span class="t" id="t50" style="top:619.20px;font-size:13px;line-height:20px;color:#ffffff;font-weight:bold;-webkit-text-stroke:0.25px #ffffff;letter-spacing:0.149px;right:625.05px;">Vouchers Redeemed</span>
<span class="t" id="t51" style="top:636.80px;font-size:11.3px;line-height:20px;color:#ffffff;-webkit-text-stroke:0.2px #ffffff;left:505.36px;">15</span>
<span class="t" id="t52" style="top:636.80px;font-size:11.3px;line-height:20px;color:#ffffff;-webkit-text-stroke:0.2px #ffffff;right:625.71px;">1</span>
<span class="t" id="t53" style="top:689.70px;font-size:13px;line-height:20px;color:#ffffff;font-weight:bold;-webkit-text-stroke:0.25px #ffffff;letter-spacing:-0.041px;left:522.18px;">Exams Passed</span>
<span class="t" id="t54" style="top:689.70px;font-size:13px;line-height:20px;color:#ffffff;font-weight:bold;-webkit-text-stroke:0.25px #ffffff;letter-spacing:-0.057px;right:641.26px;">Exams Failed</span>
<span class="t" id="t55" style="top:707.30px;font-size:11.3px;line-height:20px;color:#ffffff;-webkit-text-stroke:0.2px #ffffff;left:506.19px;">0</span>
<span class="t" id="t56" style="top:707.30px;font-size:11.3px;line-height:20px;color:#ffffff;-webkit-text-stroke:0.2px #ffffff;right:625.68px;">0</span>
<span class="t" id="t57" style="top:812.60px;font-size:14px;line-height:20px;color:#ffffff;-webkit-text-stroke:0.2px #ffffff;letter-spacing:0.045px;left:522.04px;">View All</span>
<span class="t" id="t58" style="top:579.80px;font-size:15.5px;line-height:20px;color:#ffffff;font-weight:bold;-webkit-text-stroke:0.25px #ffffff;letter-spacing:-0.472px;left:1064.40px;">Upcoming Events</span>
<span class="t" id="t59" style="top:719.55px;font-size:13.3px;line-height:20px;color:#ffffff;-webkit-text-stroke:0.25px #ffffff;letter-spacing:0.175px;left:1181.59px;">Coming Soon</span>
<span class="t" id="t60" style="top:862.60px;font-size:6.3px;line-height:20px;color:#444444;left:1581.53px;">Privacy - Terms</span>
</div>
</body>
</html>
